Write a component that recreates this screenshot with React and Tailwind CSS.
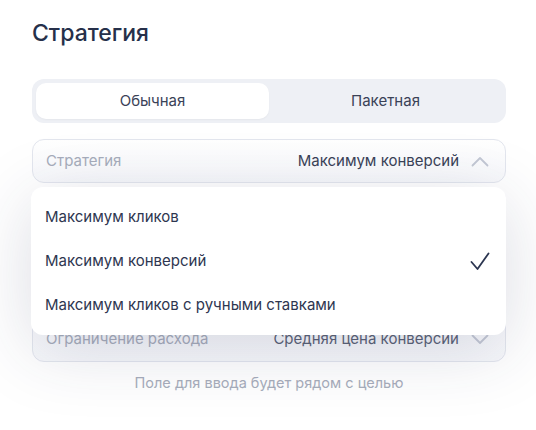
import React from "react";

const Chevron = ({ up }) => (
  <svg width="18" height="11" viewBox="0 0 18 11" fill="none" className="shrink-0">
    <path
      d={up ? "M1.5 9.5L9 2L16.5 9.5" : "M1.5 1.5L9 9L16.5 1.5"}
      stroke="#c3c8d4"
      strokeWidth="1.8"
      strokeLinecap="round"
      strokeLinejoin="round"
    />
  </svg>
);

const Check = () => (
  <svg width="20" height="19" viewBox="0 0 20 19" fill="none">
    <path d="M1.5 10L7.5 17L18.5 1.5" stroke="#2b3550" strokeWidth="1.8" strokeLinecap="round" strokeLinejoin="round" />
  </svg>
);

const Field = ({ label, value, up, dim }) => (
  <div className="h-[44px] rounded-[12px] border border-[#e3e6ee] bg-gradient-to-b from-white to-[#f7f8fb] flex items-center pl-[13px] pr-[16px] gap-[12px]">
    <span className="text-[15px] text-[#a7adbb] flex-1">{label}</span>
    <span className={"text-[15px] " + (dim ? "text-[#5b6376]" : "text-[#3a4257]")}>{value}</span>
    <Chevron up={up} />
  </div>
);

export default function App() {
  return (
    <div
      className="w-[536px] h-[430px] bg-white overflow-hidden pl-8 pr-[30px] pt-[19px]"
      style={{ fontFamily: "Inter, 'Noto Sans', sans-serif" }}
    >
      <h1 className="text-[23px] leading-[28px] font-medium text-[#26304a]">Стратегия</h1>

      <div className="mt-[32px] h-[44px] rounded-[12px] bg-[#eef0f5] p-[4px] grid grid-cols-2">
        <div className="rounded-[10px] bg-white flex items-center justify-center text-[15px] text-[#3a4257] shadow-[0_1px_2px_rgba(0,0,0,0.04)]">
          Обычная
        </div>
        <div className="flex items-center justify-center text-[15px] text-[#3a4257]">Пакетная</div>
      </div>

      <div className="relative mt-[16px] flex flex-col gap-[5px]">
        <Field label="Стратегия" value="Максимум конверсий" up />
        <div className="h-[174px] rounded-[12px] border border-[#e3e6ee] bg-gradient-to-b from-white to-[#f7f8fb] flex items-end">
          <div className="h-[44px] w-full flex items-center pl-[13px] pr-[16px] gap-[12px]">
            <span className="text-[15px] text-[#a7adbb] flex-1">Ограничение расхода</span>
            <span className="text-[15px] text-[#5b6376]">Средняя цена конверсии</span>
            <Chevron />
          </div>
        </div>
        <div className="text-center text-[14.5px] text-[#a7adbb] mt-[5px]">Поле для ввода будет рядом с целью</div>

        <div className="absolute left-[-1px] right-0 top-[48px] h-[148px] rounded-[12px] bg-white shadow-[0_14px_70px_rgba(40,50,90,0.17)] flex flex-col justify-center py-[7px]">
          {[
            ["Максимум кликов", false],
            ["Максимум конверсий", true],
            ["Максимум кликов с ручными ставками", false],
          ].map(([t, c]) => (
            <div key={t} className="h-[44px] flex items-center pl-[14px] pr-[16px] text-[15px] text-[#2e3650]">
              <span className="flex-1">{t}</span>
              {c && <Check />}
            </div>
          ))}
        </div>
      </div>
    </div>
  );
}
